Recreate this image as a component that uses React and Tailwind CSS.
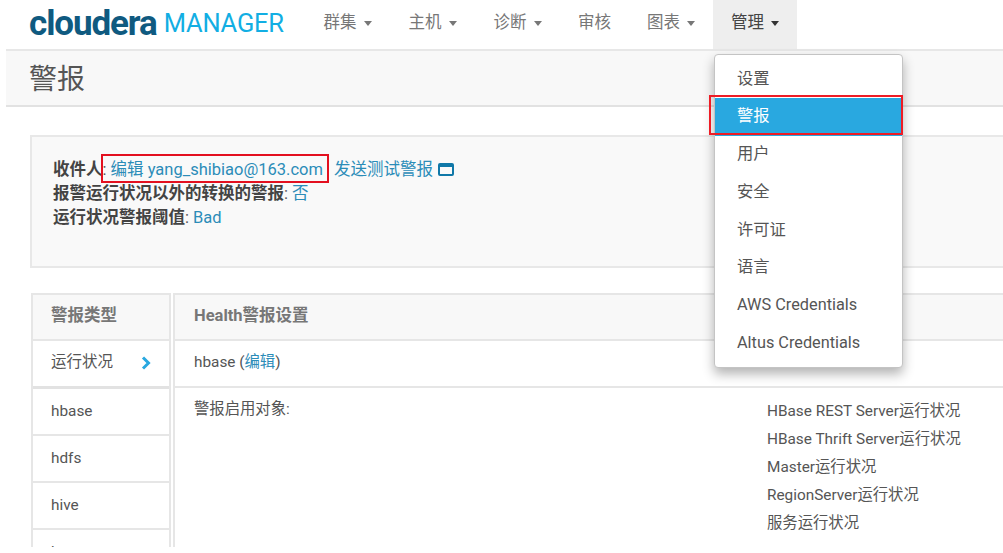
import React from "react";

const font = { fontFamily: '"Roboto","Noto Sans CJK SC",sans-serif' };
const Caret = ({ dark }) => (
  <span className={`ml-[7px] inline-block w-0 h-0 border-x-[4.5px] border-x-transparent border-t-[5px] ${dark ? "border-t-[#333]" : "border-t-[#777]"}`} />
);

function NavItem({ label, caret, w, active }) {
  return (
    <div className={`h-full flex items-center justify-center text-[16.5px] pb-[3px] ${active ? "bg-[#eeeeee] text-[#444]" : "text-[#777]"}`} style={{ width: w }}>
      <span>{label}</span>
      {caret && <Caret dark={active} />}
    </div>
  );
}

const menu = ["设置", "警报", "用户", "安全", "许可证", "语言", "AWS Credentials", "Altus Credentials"];
const types = ["hbase", "hdfs", "hive", "hue"];
const scopes = ["HBase REST Server运行状况", "HBase Thrift Server运行状况", "Master运行状况", "RegionServer运行状况", "服务运行状况"];

export default function App() {
  return (
    <div className="relative w-[1003px] h-[553px] bg-white text-[#555] text-[15.35px]" style={font}>
      <div className="h-[547px] overflow-hidden">
        <header className="h-[51px] ml-[6px] pl-[23px] flex border-b-2 border-[#e7e7e7]">
          <div className="w-[276px] flex items-center gap-[7px] pb-[3px] whitespace-nowrap">
            <span className="text-[35px] leading-none font-bold tracking-[-1.1px] text-[#0f5a80]">cloudera</span>
            <span className="text-[25.5px] leading-none mt-[2px] text-[#12aee3] tracking-[-0.2px]">MANAGER</span>
          </div>
          <nav className="flex h-[49px]">
            <NavItem label="群集" caret w={85} />
            <NavItem label="主机" caret w={85} />
            <NavItem label="诊断" caret w={85} />
            <NavItem label="审核" w={69} />
            <NavItem label="图表" caret w={84} />
            <NavItem label="管理" caret w={84} active />
          </nav>
        </header>

        <div className="ml-[6px] h-[56px] bg-[#f8f8f8] border-b-[2px] border-[#e2e2e2] pl-[23px] pt-[3px] flex items-center text-[#555] text-[28px]">
          警报
        </div>

        <section className="ml-[30px] mt-[28px] h-[133px] bg-[#f9f9f9] border-2 border-r-0 border-[#e8e8e8] pl-[21px] pt-[21px] text-[16.5px] leading-[24px]">
          <div><b className="text-[#444]">收件人</b>: <span className="text-[#2b8cb8]">编辑 yang_shibiao@163.com</span><span className="ml-[11px] text-[#2b8cb8]">发送测试警报</span>
            <span className="inline-block ml-[5px] w-[16px] h-[13px] align-[-1px] border-2 border-t-[4px] border-[#1078a8] rounded-[2px]" />
          </div>
          <div><b className="text-[#444]">报警运行状况以外的转换的警报</b>: <span className="text-[#2b8cb8]">否</span></div>
          <div><b className="text-[#444]">运行状况警报阈值</b>: <span className="text-[#2b8cb8]">Bad</span></div>
        </section>

        <section className="ml-[31px] mt-[25px] flex items-start">
          <div className="w-[140px] border-2 border-[#e6e6e6] border-b-0">
            <div className="h-[46px] bg-[#f8f8f8] border-b-2 border-[#e6e6e6] pl-[18px] pb-[2px] flex items-center font-bold text-[#777] text-[16.5px]">警报类型</div>
            <div className="h-[48px] border-b-[3px] border-[#e2e2e2] pl-[18px] pr-[18px] pb-[2px] flex items-center justify-between text-[15.5px]">
              <span>运行状况</span>
              <svg width="10" height="14" viewBox="0 0 10 14"><path d="M2 1.5 7.5 7 2 12.5" fill="none" stroke="#29a8e0" strokeWidth="3" /></svg>
            </div>
            {types.map((t) => (
              <div key={t} className="h-[47px] border-b-2 border-[#e6e6e6] pl-[18px] flex items-center">{t}</div>
            ))}
          </div>
          <div className="ml-[2px] flex-1 h-[260px] border-l-2 border-t-2 border-[#e6e6e6]">
            <div className="h-[46px] bg-[#f8f8f8] border-b-2 border-[#e6e6e6] pl-[19px] pb-[2px] flex items-center font-bold text-[#777] text-[16.5px]">Health警报设置</div>
            <div className="h-[47px] border-b-2 border-[#e6e6e6] pl-[19px] pb-[1px] flex items-center">
              hbase (<span className="text-[#2b8cb8]">编辑</span>)
            </div>
            <div className="flex pl-[19px] pt-[9px]">
              <div className="w-[573px] mt-[1px]">警报启用对象:</div>
              <ul className="leading-[28px] whitespace-nowrap">
                {scopes.map((s) => <li key={s}>{s}</li>)}
              </ul>
            </div>
          </div>
        </section>
      </div>

      <div className="absolute left-[714px] top-[54px] w-[189px] h-[314px] bg-white border border-[#c4c4c4] rounded-[4px] shadow-[0_6px_12px_rgba(0,0,0,0.3)] pt-[5px] text-[#555] text-[16.3px]">
        {menu.map((m, i) => (
          <div key={m} className={`h-[37.75px] pl-[22px] flex items-center whitespace-nowrap ${i === 1 ? "bg-[#29a8e0] text-white" : ""}`}>{m}</div>
        ))}
      </div>
      <div className="absolute left-[709px] top-[95px] w-[194px] h-[40px] border-2 border-[#ee1c25]" />
      <div className="absolute left-[101px] top-[154px] w-[228px] h-[29px] border-2 border-[#e3101f]" />
    </div>
  );
}
